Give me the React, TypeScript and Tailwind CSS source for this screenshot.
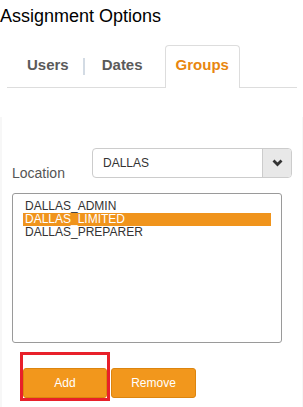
import { useState } from 'react';

const GROUPS = ['DALLAS_ADMIN', 'DALLAS_LIMITED', 'DALLAS_PREPARER'];

export default function App() {
  const [selected, setSelected] = useState('DALLAS_LIMITED');

  return (
    <div className="flex h-[407px] w-[303px] flex-col overflow-hidden bg-white font-['Liberation_Sans',Arial,sans-serif]">
      <h1 className="pt-[6px] text-[18px] leading-[20px] text-black">Assignment Options</h1>

      {/* Tabs */}
      <div className="mx-[7px] mt-[19px] flex h-[43px] w-[290px] items-start border-b border-[#dddddd] text-[15px] font-bold leading-[18px]">
        <span className="ml-[20px] pt-[11px] text-[#5a5a5a]">Users</span>
        <span className="ml-[14px] mt-[13px] h-[17px] w-[2px] bg-[#d3dbe4]" />
        <span className="ml-[17px] pt-[11px] text-[#5a5a5a]">Dates</span>
        <span className="ml-[22px] h-[43px] rounded-t-[4px] border-x border-t border-[#dddddd] bg-white px-[10px] pt-[10px] text-[#e8860f]">
          Groups
        </span>
      </div>

      {/* Panel */}
      <div className="mt-[29px] flex flex-1 flex-col border-l-2 border-r border-[#f7f7f7]">
        <div className="mt-[31px] flex items-start">
          <label className="ml-[10px] mt-[17px] w-[80px] text-[14px] leading-[16px] text-[#555555]">Location</label>
          <div className="flex h-[30px] w-[200px] overflow-hidden rounded-[4px] border border-[#cccccc]">
            <span className="flex flex-1 items-center pl-[10px] text-[12px] text-[#333333]">DALLAS</span>
            <span className="flex w-[29px] items-center justify-center border-l border-[#cccccc] bg-[#e8e8e8]">
              <svg width="11" height="8" viewBox="0 0 11 8">
                <polyline points="1.5,1.5 5.5,5.5 9.5,1.5" fill="none" stroke="#333" strokeWidth="2.8" />
              </svg>
            </span>
          </div>
        </div>

        <div className="ml-[10px] mt-[12px] h-[150px] w-[270px] rounded-[3px] border border-[#9a9a9a] px-[10px] pt-[6px]">
          {GROUPS.map((g) => (
            <div
              key={g}
              onClick={() => setSelected(g)}
              className={`pl-[2px] text-[12px] leading-[13px] ${
                g === selected ? 'bg-[#f0941c] text-white' : 'text-[#333333]'
              }`}
            >
              {g}
            </div>
          ))}
        </div>

        <div className="ml-[18px] mt-[9px] flex items-end">
          <div className="h-[49px] w-[90px] border-[3px] border-[#e8202a] pt-[13px]">
            <button className="h-[30px] w-[84px] rounded-[3px] border border-[#dc850f] bg-[#f2971c] text-[12px] text-white">
              Add
            </button>
          </div>
          <button className="mb-[3px] ml-px h-[30px] w-[85px] rounded-[3px] border border-[#dc850f] bg-[#f2971c] text-[12px] text-white">
            Remove
          </button>
        </div>
      </div>
    </div>
  );
}
